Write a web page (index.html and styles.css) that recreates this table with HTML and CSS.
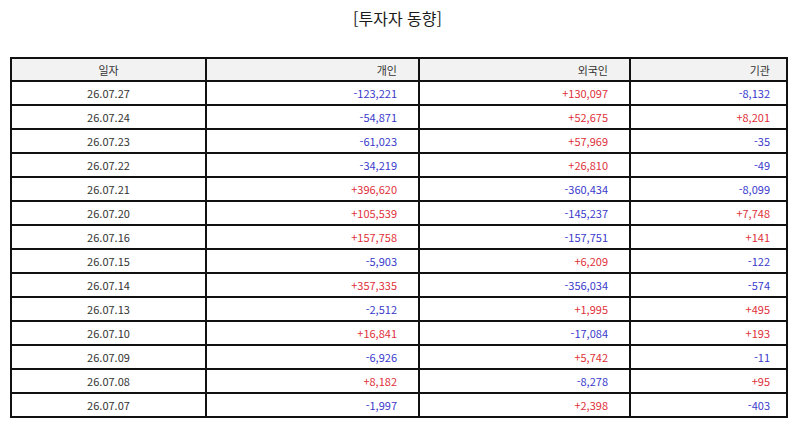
FILE: index.html
```html
<!DOCTYPE html>
<html lang="ko">
<head>
<meta charset="utf-8">
<link rel="stylesheet" href="styles.css">
</head>
<body>
<div class="page">
  <h1 class="title">[투자자 동향]</h1>
  <table class="grid">
    <colgroup>
      <col class="c-date"><col class="c-ind"><col class="c-for"><col class="c-inst">
    </colgroup>
    <thead>
      <tr><th class="center">일자</th><th class="num p1">개인</th><th class="num p2">외국인</th><th class="num p3">기관</th></tr>
    </thead>
    <tbody>
      <tr><td class="center">26.07.27</td><td class="num p1 dn">-123,221</td><td class="num p2 up">+130,097</td><td class="num p3 dn">-8,132</td></tr>
      <tr><td class="center">26.07.24</td><td class="num p1 dn">-54,871</td><td class="num p2 up">+52,675</td><td class="num p3 up">+8,201</td></tr>
      <tr><td class="center">26.07.23</td><td class="num p1 dn">-61,023</td><td class="num p2 up">+57,969</td><td class="num p3 dn">-35</td></tr>
      <tr><td class="center">26.07.22</td><td class="num p1 dn">-34,219</td><td class="num p2 up">+26,810</td><td class="num p3 dn">-49</td></tr>
      <tr><td class="center">26.07.21</td><td class="num p1 up">+396,620</td><td class="num p2 dn">-360,434</td><td class="num p3 dn">-8,099</td></tr>
      <tr><td class="center">26.07.20</td><td class="num p1 up">+105,539</td><td class="num p2 dn">-145,237</td><td class="num p3 up">+7,748</td></tr>
      <tr><td class="center">26.07.16</td><td class="num p1 up">+157,758</td><td class="num p2 dn">-157,751</td><td class="num p3 up">+141</td></tr>
      <tr><td class="center">26.07.15</td><td class="num p1 dn">-5,903</td><td class="num p2 up">+6,209</td><td class="num p3 dn">-122</td></tr>
      <tr><td class="center">26.07.14</td><td class="num p1 up">+357,335</td><td class="num p2 dn">-356,034</td><td class="num p3 dn">-574</td></tr>
      <tr><td class="center">26.07.13</td><td class="num p1 dn">-2,512</td><td class="num p2 up">+1,995</td><td class="num p3 up">+495</td></tr>
      <tr><td class="center">26.07.10</td><td class="num p1 up">+16,841</td><td class="num p2 dn">-17,084</td><td class="num p3 up">+193</td></tr>
      <tr><td class="center">26.07.09</td><td class="num p1 dn">-6,926</td><td class="num p2 up">+5,742</td><td class="num p3 dn">-11</td></tr>
      <tr><td class="center">26.07.08</td><td class="num p1 up">+8,182</td><td class="num p2 dn">-8,278</td><td class="num p3 up">+95</td></tr>
      <tr><td class="center">26.07.07</td><td class="num p1 dn">-1,997</td><td class="num p2 up">+2,398</td><td class="num p3 dn">-403</td></tr>
    </tbody>
  </table>
</div>
</body>
</html>
```
FILE: styles.css
```css
html, body {
  margin: 0;
  padding: 0;
  background: #ffffff;
}
.page {
  padding: 6px 9px 0 10px;
  font-family: "Noto Sans CJK KR", "Noto Sans", sans-serif;
  color: #333333;
}
.title {
  margin: 0 0 27px 0;
  text-align: center;
  font-size: 16px;
  font-weight: normal;
  line-height: 24px;
  color: #1a1a1a;
}
.grid {
  width: 776px;
  border-collapse: collapse;
  table-layout: fixed;
  font-size: 11px;
}
.c-date { width: 195px; }
.c-ind { width: 213px; }
.c-for { width: 211px; }
.c-inst { width: 157px; }
.grid th, .grid td {
  border: 2px solid #111111;
  height: 22px;
  padding: 0;
  line-height: 14px;
  font-weight: normal;
  color: #333333;
}
.grid thead th {
  background: #f2f2f2;
  height: 21px;
}
.center { text-align: center; }
.num { text-align: right; }
.p1 { padding-right: 21px !important; }
.p2 { padding-right: 21px !important; }
.p3 { padding-right: 16px !important; }
.grid td.up { color: #e0303a; }
.grid td.dn { color: #3a3acc; }
```
